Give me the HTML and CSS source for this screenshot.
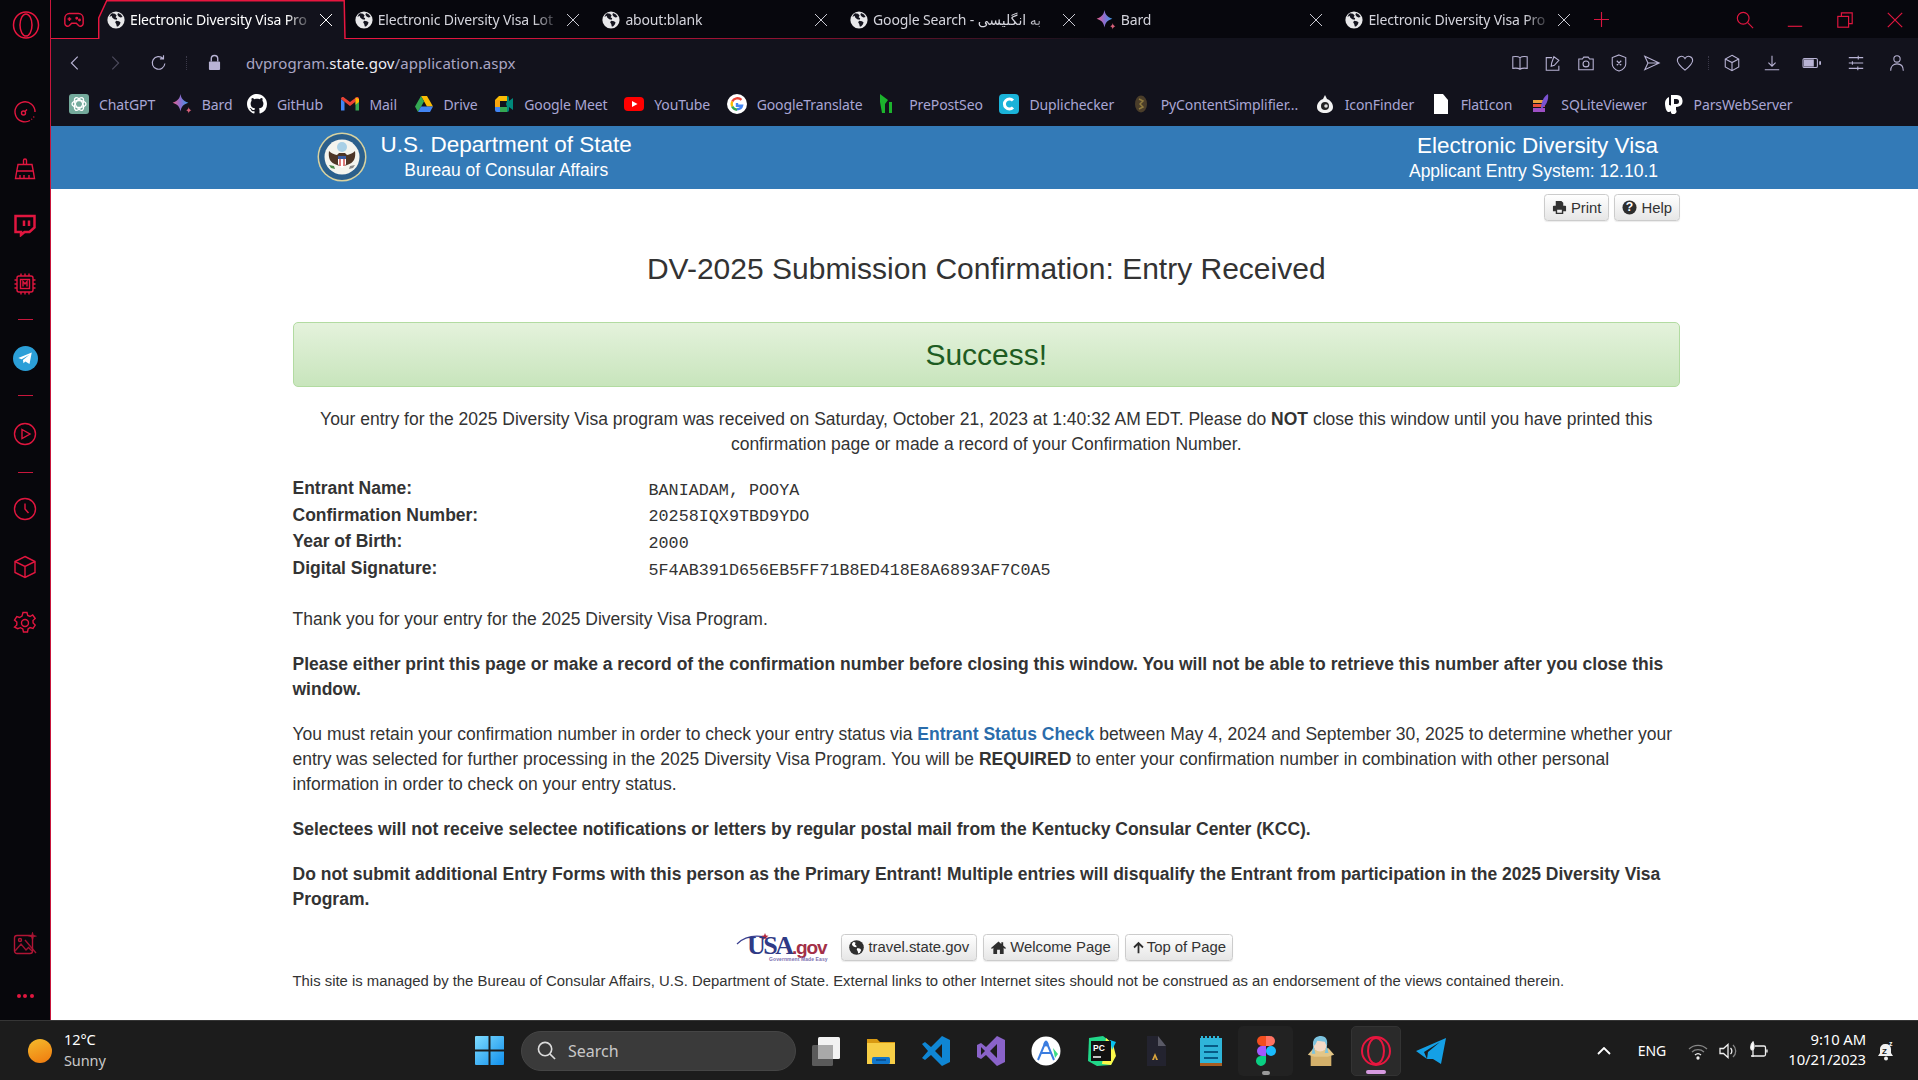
FILE: index.html
```html
<!DOCTYPE html>
<html lang="en">
<head>
<meta charset="utf-8">
<title>DV-2025 Submission Confirmation</title>
<link rel="stylesheet" href="styles.css">
</head>
<body>
<svg class="defs" width="0" height="0" aria-hidden="true">
  <symbol id="globe" viewBox="0 0 18 18">
    <circle cx="9" cy="9" r="8.6" fill="#e8e8ea"/>
    <path d="M5 2.2l3 .6 1.6 1.6-1 1.8 1.6 1-.6 1.6-2.4-.6-2-1.6-.6-1.8L2.4 6 3.6 3.4zM9 9.8l3 .4 1.6 1.2-.8 2.2-1.8 2-1.2-.2-.6-2.4-1-1.6zM11 2l3 1.4 1.6 2.6-2.2.6-1.8-1.2-1.2-1.6z" fill="#15151f"/>
  </symbol>
  <symbol id="x" viewBox="0 0 14 14"><path d="M1 1l12 12M13 1L1 13" fill="none" stroke="currentColor" stroke-width="1"/></symbol>
  <symbol id="bard" viewBox="1 1 21.500 23">
    <defs><linearGradient id="bg" x1="0" x2="1" y1="0" y2="0"><stop offset="0" stop-color="#e8608a"/><stop offset=".5" stop-color="#8a6fd0"/><stop offset="1" stop-color="#3b9be8"/></linearGradient></defs>
    <path d="M10 1c.8 5 3 8 9 10-6 2-8.200 5-9 10-.8-5-3-8-9-10 6-2 8.200-5 9-10z" fill="url(#bg)"/>
    <path d="M19.500 16c.3 2 1 3 3 3.800-2 .7-2.700 1.700-3 3.700-.3-2-1-3-3-3.700 2-.8 2.700-1.800 3-3.800z" fill="#d9607a"/>
  </symbol>
  <symbol id="glob-d" viewBox="0 0 16 16">
    <circle cx="8" cy="8" r="7.800" fill="#2e2e2e"/>
    <path d="M5 1.800l2 1.200-.6 2 1.800 1.400-.6 1.400-2.400-.6-2-1.800.2-2zM9 8.600l3 .6 1 1.400-1.400 3-1.800.8-.6-2.600-1-1.400z" fill="#fff"/>
  </symbol>
</svg>

<div class="app">
  <aside class="sidebar">
    <svg class="side-logo" viewBox="0 0 30 30"><ellipse cx="15" cy="15" rx="12.500" ry="13" fill="none" stroke="#e8163f" stroke-width="1.500"/><ellipse cx="15" cy="15" rx="6" ry="11" fill="none" stroke="#e8163f" stroke-width="1.500"/></svg>
    <svg class="side-ic s-speed" viewBox="0 0 24 24"><path d="M17 20.500A10 10 0 1 1 22 12" fill="none"/><path d="M21 16.500l-.5 1M19 19l-.6.600M14 9.500l-2 2" /><circle cx="10.500" cy="13" r="2"/></svg>
    <svg class="side-ic s-broom" viewBox="0 0 24 24"><path d="M10.500 7V3.500a1.500 1.500 0 0 1 3 0V7M5 7.500h14l1.500 8 1 6H2.500l1-6zM3.500 14h17M7 21v-3M11 21v-3M16 21v-3"/></svg>
    <svg class="side-ic s-twitch" viewBox="0 0 24 24"><path d="M2.500 3h19v11.500l-5 4.500h-5L8 22v-3H2.500zM11 7.500V13M16 7.500V13" stroke-width="2.500"/></svg>
    <svg class="side-ic s-chip" viewBox="0 0 24 24"><rect x="4" y="4" width="16" height="16" rx="2"/><rect x="7.500" y="7.500" width="9" height="9"/><path d="M8 1.500V4M12 1.500V4M16 1.500V4M8 20v2.500M12 20v2.500M16 20v2.500M1.500 8H4M1.500 12H4M1.500 16H4M20 8h2.500M20 12h2.500M20 16h2.500M10 14.500v-5l2 2.500 2-2.500v5"/></svg>
    <i class="side-sep s-sep1"></i>
    <div class="side-tg"><svg viewBox="0 0 24 24"><path d="M3 12L21 4.500 18 20l-5.500-3.500-2.500 2.500-.8-4.500L18 7.500 7.500 13.800z" fill="#fff"/></svg></div>
    <i class="side-sep s-sep2"></i>
    <svg class="side-ic s-play" viewBox="0 0 24 24"><circle cx="12" cy="12" r="10.500"/><path d="M9 7.500l8 4.500-8 4.500z"/></svg>
    <i class="side-sep s-sep3"></i>
    <svg class="side-ic s-clock" viewBox="0 0 24 24"><circle cx="12" cy="12" r="10.500"/><path d="M12 6.500V12l3.500 4"/></svg>
    <svg class="side-ic s-cube" viewBox="0 0 24 24"><path d="M12 1.500l10 5v11l-10 5-10-5v-11zM2 6.500l10 5 10-5M12 11.500v11"/></svg>
    <svg class="side-ic s-gear" viewBox="0 0 24 24"><circle cx="12" cy="12" r="3.500"/><path d="M10 1.500h4l.7 3 2.300 1 2.700-1.500 2.500 3.500-2.200 2 .1 2.500 2.100 2-2.200 3.500-2.900-1-2 1.400-.6 3.100h-4l-.7-3-2.300-1.300-2.800 1L1.500 16l2.300-2.100V11L1.500 9l2.300-3.500 2.800 1 2.400-1.400z"/></svg>
    <div class="side-bottom">
      <svg class="side-ic" viewBox="0 0 24 24"><rect x="1.500" y="3.500" width="18" height="18" rx="2.500"/><path d="M2 19l6-7 5 6 2.500-2.500L19 19M19.500 1.500l.6 2 2 .6-2 .6-.6 2-.6-2-2-.6 2-.6zM12 8l11 13" opacity=".9"/><circle cx="7" cy="8" r="1.500"/></svg>
      <div class="side-dots"><i></i><i></i><i></i></div>
    </div>
  </aside>

  <main class="window">
    <nav class="tabstrip">
      <svg class="gamepad" viewBox="0 0 24 24"><path d="M7 5h10a5 5 0 0 1 5 5v6a3 3 0 0 1-5 2l-2.500-2.500h-5L7 18a3 3 0 0 1-5-2v-6a5 5 0 0 1 5-5zM7 9v4M5 11h4"/><circle cx="15" cy="10" r=".8"/><circle cx="18" cy="12" r=".8"/></svg>
      <div class="tab tab-active">
        <svg class="tab-outline" viewBox="0 0 248 39"><path d="M.7 39V18L8.700 .8h237.500L247 39" fill="#12121c" stroke="#e8163f" stroke-width="1.500"/></svg>
        <svg class="fav"><use href="#globe"/></svg><span class="tab-title bright">Electronic Diversity Visa Pro</span><svg class="tab-x"><use href="#x"/></svg>
      </div>
      <div class="tab"><svg class="fav"><use href="#globe"/></svg><span class="tab-title">Electronic Diversity Visa Lot</span><svg class="tab-x"><use href="#x"/></svg></div>
      <div class="tab"><svg class="fav"><use href="#globe"/></svg><span class="tab-title">about:blank</span><svg class="tab-x"><use href="#x"/></svg></div>
      <div class="tab"><svg class="fav"><use href="#globe"/></svg><span class="tab-title">Google Search - به انگلیسی</span><svg class="tab-x"><use href="#x"/></svg></div>
      <div class="tab"><svg class="fav fav-big"><use href="#bard"/></svg><span class="tab-title">Bard</span><svg class="tab-x"><use href="#x"/></svg></div>
      <div class="tab"><svg class="fav"><use href="#globe"/></svg><span class="tab-title">Electronic Diversity Visa Pro</span><svg class="tab-x"><use href="#x"/></svg></div>
      <svg class="newtab" viewBox="0 0 16 16"><path d="M8 0v16M0 8h16"/></svg>
      <div class="winctl">
        <svg viewBox="0 0 20 20"><circle cx="8" cy="8" r="6.500"/><path d="M13 13l6 6"/></svg>
        <svg viewBox="0 0 20 20"><path d="M2 17h16"/></svg>
        <svg viewBox="0 0 20 20"><rect x="2" y="6" width="12" height="12"/><path d="M6 6V2h12v12h-4"/></svg>
        <svg viewBox="0 0 20 20"><path d="M2 2l16 16M18 2L2 18"/></svg>
      </div>
    </nav>

    <div class="toolbar">
      <svg class="tb-ic" viewBox="0 0 20 20"><path d="M13 3l-7 7 7 7"/></svg>
      <svg class="tb-ic tb-fwd" viewBox="0 0 20 20"><path d="M7 3l7 7-7 7"/></svg>
      <svg class="tb-ic tb-reload" viewBox="0 0 20 20"><path d="M16.500 10.500a7 7 0 1 1-2-5.500M15 1.500V5.500h-4"/></svg>
      <i class="tb-sep"></i>
      <svg class="lock" viewBox="0 0 14 18"><path d="M3.500 8V5a3.500 3.500 0 0 1 7 0v3" fill="none" stroke="#b8b3d4" stroke-width="1.500"/><rect x="1" y="8" width="12" height="9" rx="1" fill="#b8b3d4"/></svg>
      <div class="url">dvprogram.<b>state.gov</b>/application.aspx</div>
      <div class="tb-right">
        <svg viewBox="0 0 20 20"><path d="M10 4C8 2.500 5 2.500 2 3v13c3-.5 6-.5 8 1 2-1.500 5-1.500 8-1V3c-3-.5-6-.5-8 1zM10 4v13"/></svg>
        <svg viewBox="0 0 20 20"><path d="M9 4H2.500v14h14v-5M11 3l5.500 4-5 5.500-3.500 1 .5-3.500zM2.500 18h14"/></svg>
        <svg viewBox="0 0 20 20"><path d="M2 5.500h4l1.500-2h5l1.500 2h4v12H2z"/><circle cx="10" cy="11" r="3.300"/></svg>
        <svg viewBox="0 0 20 20"><path d="M10 1l7.500 3v7c0 4-3.500 6.500-7.500 8-4-1.500-7.500-4-7.500-8V4zM7.500 7.500l5 5M12.500 7.500l-5 5"/></svg>
        <svg viewBox="0 0 20 20"><path d="M2 2.500l16 7.500-16 7.500 3.500-7.500zM5.500 10H18"/></svg>
        <svg viewBox="0 0 20 20"><path d="M10 18C5 14 1.500 11 1.500 7a4.500 4.500 0 0 1 8.500-2 4.500 4.500 0 0 1 8.500 2c0 4-3.500 7-8.500 11z"/></svg>
        <i class="tb-sep"></i>
        <svg viewBox="0 0 20 20"><path d="M10 1.500l7.500 4v9l-7.500 4-7.500-4v-9zM2.500 5.500l7.500 4 7.500-4M10 9.500v9"/></svg>
        <svg class="tr-dl" viewBox="0 0 20 20"><path d="M10 2v11M6 9.500l4 4 4-4M2 17.500h16"/></svg>
        <svg class="tr-bat" viewBox="0 0 22 20"><rect x="1" y="5" width="16" height="10" rx="1.500"/><rect x="2" y="6" width="11" height="8" fill="#b8b3d4" stroke="none"/><path d="M20 8v4" stroke-width="2"/></svg>
        <svg class="tr-set" viewBox="0 0 20 20"><path d="M2 4h16M2 10h16M2 16h16M12.500 2v4M6 8v4M12 14v4"/></svg>
        <svg class="tr-usr" viewBox="0 0 20 20"><circle cx="10" cy="5.500" r="3.500"/><path d="M3 18.500c0-5 3-7.500 7-7.500s7 2.500 7 7.500"/></svg>
      </div>
    </div>

    <div class="bookmarks">
      <a><svg viewBox="0 0 20 20"><rect width="20" height="20" rx="3" fill="#74aa9c"/><g fill="none" stroke="#fff" stroke-width="1.300"><ellipse cx="10" cy="10" rx="7" ry="3.500"/><ellipse cx="10" cy="10" rx="7" ry="3.500" transform="rotate(60 10 10)"/><ellipse cx="10" cy="10" rx="7" ry="3.500" transform="rotate(120 10 10)"/></g></svg>ChatGPT</a>
      <a><svg><use href="#bard"/></svg>Bard</a>
      <a class="bm-gh"><svg viewBox="0 0 16 16"><path fill="#fff" d="M8 0C3.580 0 0 3.580 0 8c0 3.540 2.290 6.530 5.470 7.590.4.070.55-.17.55-.38 0-.19-.01-.82-.01-1.490-2.010.37-2.530-.49-2.690-.94-.09-.23-.48-.94-.82-1.130-.28-.15-.68-.52-.01-.53.63-.01 1.080.58 1.230.82.72 1.210 1.870.87 2.330.66.07-.52.28-.87.51-1.070-1.780-.2-3.640-.89-3.640-3.950 0-.87.31-1.590.82-2.150-.08-.2-.36-1.020.08-2.120 0 0 .67-.21 2.200.82.64-.18 1.320-.27 2-.27.68 0 1.360.09 2 .27 1.530-1.040 2.200-.82 2.200-.82.44 1.100.16 1.920.08 2.120.51.56.82 1.270.82 2.150 0 3.070-1.870 3.750-3.650 3.950.29.25.54.73.54 1.480 0 1.070-.01 1.930-.01 2.200 0 .21.15.46.55.38A8.013 8.013 0 0016 8c0-4.420-3.580-8-8-8z"/></svg>GitHub</a>
      <a><svg viewBox="0 0 20 20"><path d="M1 5v11.500h3.500V8z" fill="#4285f4"/><path d="M19 5v11.500h-3.500V8z" fill="#34a853"/><path d="M1 5c0-2 2-2.500 3-1.500l6 4.500 6-4.500c1-1 3-.5 3 1.500l-9 7z" fill="#ea4335"/><path d="M15.500 3.500L19 5v3l-3.500 2.700z" fill="#fbbc04"/></svg>Mail</a>
      <a><svg viewBox="0 0 20 20"><path d="M7 2h6l6 10.500h-6z" fill="#fbbc04"/><path d="M7 2l-6 10.500L4 18l6-10.500z" fill="#34a853"/><path d="M7 12.500h12L16 18H4z" fill="#4285f4"/></svg>Drive</a>
      <a><svg viewBox="0 0 20 20"><path d="M5 2h8v5H6v6H1V6z" fill="#fbbc04"/><path d="M1 13h5v5H3a2 2 0 0 1-2-2z" fill="#4285f4"/><path d="M6 13h7v5H6z" fill="#34a853"/><path d="M13 2a2 2 0 0 1 2 2v3l4-3v12l-4-3v3a2 2 0 0 1-2 2v-5l-1-3 1-3z" fill="#00897b"/><path d="M1 6h5v7H1z" fill="#ea4335" opacity=".2"/></svg>Google Meet</a>
      <a><svg viewBox="0 0 20 20"><rect y="3" width="20" height="14" rx="4" fill="#f00"/><path d="M8 7l5.500 3L8 13z" fill="#fff"/></svg>YouTube</a>
      <a><svg viewBox="0 0 20 20"><circle cx="10" cy="10" r="10" fill="#fff"/><path d="M10 9v2.800h5c-.5 2-2.200 3.400-5 3.400" fill="none" stroke="#4285f4" stroke-width="2.400"/><path d="M14.500 5.800A6 6 0 0 0 5.200 7.500" fill="none" stroke="#ea4335" stroke-width="2.400"/><path d="M5.200 7.500a6 6 0 0 0 0 5" fill="none" stroke="#fbbc04" stroke-width="2.400"/><path d="M5.200 12.500A6 6 0 0 0 10 15.800" fill="none" stroke="#34a853" stroke-width="2.400"/></svg>GoogleTranslate</a>
      <a><svg viewBox="0 0 20 20"><path d="M1 0l8 6-3 4v9H3L1 8zM10 8v11h3V8z" fill="#1cb32d"/></svg>PrePostSeo</a>
      <a><svg viewBox="0 0 20 20"><rect width="20" height="20" rx="4" fill="#1ab3d9"/><path d="M14 6.500a5 5 0 1 0 0 7" fill="none" stroke="#fff" stroke-width="3"/></svg>Duplichecker</a>
      <a><svg viewBox="0 0 20 20"><ellipse cx="10" cy="10" rx="6" ry="8.500" fill="#4a3d2a"/><path d="M8 5l4 2-3 3 3 3-4 2" fill="none" stroke="#8f7a3e" stroke-width="1.500"/></svg>PyContentSimplifier...</a>
      <a><svg viewBox="0 0 20 20"><path d="M10 1l2 4c3 1 6 4 6 8 0 4-4 6-8 6s-8-2-8-6c0-4 3-7 6-8z" fill="#f2f2f2"/><circle cx="10" cy="12" r="4" fill="#222"/><circle cx="11" cy="12" r="1.800" fill="#ddd"/></svg>IconFinder</a>
      <a><svg viewBox="0 0 20 20"><path d="M3 0h9l5 6v14H3z" fill="#fff"/></svg>FlatIcon</a>
      <a class="bm-sql"><svg viewBox="0 0 20 20"><path d="M2 6h12v3H2z" fill="#e9a23b"/><path d="M2 10h12v3H2z" fill="#e8503a"/><path d="M2 14h12v4H2z" fill="#9d4fc4"/><path d="M17 0c1 6-2 12-7 15 0-6 2-12 7-15z" fill="#7a52d0"/></svg>SQLiteViewer</a>
      <a><svg viewBox="0 0 20 20"><path d="M7 1h6a6 6 0 0 1 1 11.800l-2 .2v2.800a2.500 2.500 0 0 1-5 3zM1 9a7 7 0 0 1 4-6v8a3 3 0 0 1-1 7c-2-1-3-5-3-9z" fill="#fff"/><path d="M10 5h2.500a2.500 2.500 0 0 1 0 5H10z" fill="#12121c"/></svg>ParsWebServer</a>
    </div>

    <div class="page">
      <header class="site-head">
        <div class="head-inner">
          <svg class="seal" viewBox="0 0 50 50">
            <circle cx="25" cy="25" r="24.500" fill="#d8d2a0"/><circle cx="25" cy="25" r="23" fill="#2b5f8c"/><circle cx="25" cy="25" r="17.500" fill="#f4f4ee"/>
            <circle cx="25" cy="15" r="5" fill="#a9d0e6"/>
            <path d="M12 19c3 3 5 3 8 4l2-2h6l2 2c3-1 5-1 8-4 1 7-1 12-8 14l-5 2-5-2c-7-2-9-7-8-14z" fill="#4d3526"/>
            <path d="M21 24h8v8c-1 3-3 3.500-4 4-1-.5-3-1-4-4z" fill="#fff"/><path d="M21 24h8v3h-8z" fill="#3a5aa0"/><path d="M23 27v7M27 27v7" stroke="#c33" stroke-width="1.300"/>
            <path d="M12 33l5 1 1 3-4-1z" fill="#4a8a4a"/><path d="M38 33l-5 1-1 3 4-1z" fill="#8a8a8a"/>
          </svg>
          <div class="head-title">
            <div class="ht-main">U.S. Department of State</div>
            <div class="ht-sub">Bureau of Consular Affairs</div>
          </div>
          <div class="head-right">
            <div class="hr-main">Electronic Diversity Visa</div>
            <div class="hr-sub">Applicant Entry System: 12.10.1</div>
          </div>
        </div>
      </header>

      <div class="container">
        <div class="top-btns">
          <a class="btn"><svg viewBox="0 0 16 16"><path d="M4 1h6l2 2v3H4zM1 7a1 1 0 0 1 1-1h12a1 1 0 0 1 1 1v5h-3v3H4v-3H1zM5.500 10.500v3h5v-3z" fill="#333" fill-rule="evenodd"/></svg>Print</a>
          <a class="btn"><svg viewBox="0 0 16 16"><circle cx="8" cy="8" r="7.500" fill="#2e2e2e"/><text x="8" y="12" text-anchor="middle" class="q">?</text></svg>Help</a>
        </div>

        <h1 class="title">DV-2025 Submission Confirmation: Entry Received</h1>

        <div class="alert">Success!</div>

        <p class="center">Your entry for the 2025 Diversity Visa program was received on Saturday, October 21, 2023 at 1:40:32 AM EDT. Please do <b>NOT</b> close this window until you have printed this confirmation page or made a record of your Confirmation Number.</p>

        <dl class="facts">
          <dt>Entrant Name:</dt><dd>BANIADAM, POOYA</dd>
          <dt>Confirmation Number:</dt><dd>20258IQX9TBD9YDO</dd>
          <dt>Year of Birth:</dt><dd>2000</dd>
          <dt>Digital Signature:</dt><dd>5F4AB391D656EB5FF71B8ED418E8A6893AF7C0A5</dd>
        </dl>

        <p>Thank you for your entry for the 2025 Diversity Visa Program.</p>
        <p><b>Please either print this page or make a record of the confirmation number before closing this window. You will not be able to retrieve this number after you close this window.</b></p>
        <p>You must retain your confirmation number in order to check your entry status via <a class="link">Entrant Status Check</a> between May 4, 2024 and September 30, 2025 to determine whether your entry was selected for further processing in the 2025 Diversity Visa Program. You will be <b>REQUIRED</b> to enter your confirmation number in combination with other personal information in order to check on your entry status.</p>
        <p><b>Selectees will not receive selectee notifications or letters by regular postal mail from the Kentucky Consular Center (KCC).</b></p>
        <p><b>Do not submit additional Entry Forms with this person as the Primary Entrant! Multiple entries will disqualify the Entrant from participation in the 2025 Diversity Visa Program.</b></p>

        <div class="foot-btns">
          <svg class="usagov" viewBox="0 -6 100 38">
            <path d="M1 11C8 4 18 2 29 4" fill="none" stroke="#3a3f8f" stroke-width="1.200"/>
            <path d="M29 0l1 2.500 2.500.3-2 1.500.6 2.500-2.100-1.400-2.100 1.400.6-2.500-2-1.500 2.500-.3z" fill="#b5263c"/>
            <text x="11" y="21" class="ug-a">USA</text><text x="56" y="21" class="ug-b">.gov</text>
            <text x="33" y="28" class="ug-c">Government Made Easy</text>
          </svg>
          <a class="btn"><svg><use href="#glob-d"/></svg>travel.state.gov</a>
          <a class="btn"><svg viewBox="0 0 16 16"><path d="M8 1.500L0 8.500l1 1 1.500-1.300V15h4v-4.500h3V15h4V8.200L15 9.500l1-1-3-2.600V2.500h-2v1.700z" fill="#2e2e2e"/></svg>Welcome Page</a>
          <a class="btn btn-up"><svg viewBox="0 0 16 16"><path d="M8 15V2.500M2.500 8L8 2.500 13.500 8" fill="none" stroke="#2e2e2e" stroke-width="2.200"/></svg>Top of Page</a>
        </div>
        <p class="fine">This site is managed by the Bureau of Consular Affairs, U.S. Department of State. External links to other Internet sites should not be construed as an endorsement of the views contained therein.</p>
      </div>
    </div>
  </main>
</div>

<footer class="taskbar">
  <div class="weather">
    <i class="sun"></i>
    <div class="w-text"><div class="w-temp">12°C</div><div class="w-desc">Sunny</div></div>
  </div>
  <svg class="start" viewBox="0 0 29 29">
    <defs><linearGradient id="wg" x1="0" y1="0" x2="1" y2="1"><stop offset="0" stop-color="#7fdcff"/><stop offset="1" stop-color="#0f8fec"/></linearGradient></defs>
    <path d="M1 0h12.500v13.500H0V1a1 1 0 0 1 1-1zM15.500 0H28a1 1 0 0 1 1 1v12.500H15.500zM0 15.500h13.500V29H1a1 1 0 0 1-1-1zM15.500 15.500H29V28a1 1 0 0 1-1 1H15.500z" fill="url(#wg)"/>
  </svg>
  <div class="searchbox">
    <svg viewBox="0 0 20 20"><circle cx="8.500" cy="8.500" r="7"/><path d="M13.500 13.500L19 19"/></svg>
    <span>Search</span>
  </div>
  <div class="apps">
    <div class="app-slot"><svg viewBox="0 0 30 30"><rect x="1" y="9" width="21" height="21" rx="1.500" fill="#5a5a5a"/><rect x="7" y="1" width="22" height="22" rx="1.500" fill="#f2f2f2"/><rect x="7" y="9" width="15" height="14" fill="#a9a9a9"/></svg></div>
    <div class="app-slot"><svg viewBox="0 0 30 30"><path d="M1 3h10l3 3h15v3H1z" fill="#d99a12"/><rect x="1" y="7" width="28" height="21" fill="#f7ce46"/><rect x="6" y="21" width="18" height="7" rx="1.500" fill="#1177cc"/><path d="M10 24h10" stroke="#0a4a88" stroke-width="1.500"/></svg></div>
    <div class="app-slot"><svg viewBox="0 0 30 30"><path d="M21 0l8 4v22l-8 4-11-11-6 5-3-2 6-7-6-7 3-2 6 5zM21 8l-7 7 7 7z" fill="#0f86d4"/></svg></div>
    <div class="app-slot"><svg viewBox="0 0 30 30"><path d="M21 0l8 4v22l-8 4-11-11-5 4-4-2V9l4-2 5 4zM21 8l-7 7 7 7zM5 11v8l4-4z" fill="#8a63c9"/></svg></div>
    <div class="app-slot"><svg viewBox="0 0 30 30"><circle cx="15" cy="15" r="14.500" fill="#fff"/><path d="M15 5l-8 19M15 5l8 19M9.500 17h11" fill="none" stroke="#3b7de0" stroke-width="2"/><circle cx="15" cy="8" r="2.500" fill="#3b7de0"/><path d="M22 12l5 6-3 4z" fill="#3ddc84"/></svg></div>
    <div class="app-slot"><svg viewBox="0 0 30 30"><path d="M3 2l14-2 8 6 4 14-4 9-14 1-9-5z" fill="#21d789"/><path d="M20 2l7 6 3 12-5 9-9-1z" fill="#fcf84a"/><path d="M24 4l6 2-4 8z" fill="#07c3f2"/><rect x="5" y="5" width="20" height="20" fill="#111"/><text x="7" y="15" class="pc">PC</text><path d="M7 21h8" stroke="#fff" stroke-width="1.500"/></svg></div>
    <div class="app-slot"><svg viewBox="0 0 24 30"><path d="M3 0h11l8 10v20H3z" fill="#23232f"/><path d="M14 0l8 10h-8z" fill="#5a5a66"/><path d="M11 17l3 7h-2l-1-3-1 3H8z" fill="#d9a43c"/></svg></div>
    <div class="app-slot"><svg viewBox="0 0 26 30"><rect x="2" y="2" width="22" height="27" fill="#2fb5d9"/><path d="M2 27h22v3H2z" fill="#a85c20"/><path d="M6 10h14M6 16h14M6 22h14" stroke="#075b85" stroke-width="2"/><path d="M4 0v3M8 0v3M12 0v3M16 0v3M20 0v3" stroke="#2fb5d9" stroke-width="2"/></svg></div>
    <div class="app-slot tile-soft"><svg viewBox="0 0 20 30"><path d="M10 0H6a5 5 0 0 0 0 10h4z" fill="#f24e1e"/><path d="M10 0h4a5 5 0 0 1 0 10h-4z" fill="#ff7262"/><path d="M10 10H6a5 5 0 0 0 0 10h4z" fill="#a259ff"/><circle cx="15" cy="15" r="5" fill="#1abcfe"/><path d="M6 20h4v5a5 5 0 1 1-4-5z" fill="#0acf83"/></svg><i class="run run-grey"></i></div>
    <div class="app-slot"><svg viewBox="0 0 28 32"><rect x="3" y="18" width="22" height="14" fill="#d4b06a"/><path d="M0 20l6-7h16l6 7-7 2H7z" fill="#e3c687"/><circle cx="13" cy="9" r="7.500" fill="#f4d9c6"/><path d="M6 11C4 2 10 0 14 0c5 0 8 4 6 11l-2-5-8-1-2 4z" fill="#7cc3df"/><path d="M6 10l-2 9h4zM20 10l2 8h-4z" fill="#7cc3df"/></svg></div>
    <div class="app-slot tile-on"><svg viewBox="0 0 30 30"><ellipse cx="15" cy="15" rx="14" ry="14" fill="none" stroke="#e8163f" stroke-width="2"/><ellipse cx="15" cy="15" rx="8" ry="13" fill="none" stroke="#e8163f" stroke-width="2"/></svg><i class="run run-pink"></i></div>
    <div class="app-slot"><svg viewBox="0 0 30 30"><path d="M0 15L30 2l-5 26-8-5-6 0zM11 23l1-7 12-10-16 10z" fill="#14a0e6"/></svg></div>
  </div>
  <div class="tray">
    <svg class="t-caret" viewBox="0 0 14 8"><path d="M1 7l6-6 6 6"/></svg>
    <span class="t-lang">ENG</span>
    <svg class="t-ic" viewBox="0 0 20 20"><path d="M1 8a13 13 0 0 1 18 0M4 11a9 9 0 0 1 12 0" opacity=".5"/><path d="M7 14a4.500 4.500 0 0 1 6 0"/><circle cx="10" cy="17" r="1" fill="#fff"/></svg>
    <svg class="t-ic" viewBox="0 0 20 20"><path d="M2 7.500h3.500L10 3.500v13l-4.500-4H2zM12.500 7a4 4 0 0 1 0 6"/><path d="M15 4a8 8 0 0 1 0 12" opacity=".5"/></svg>
    <svg class="t-ic" viewBox="0 0 20 20"><path d="M7 5h9a1.500 1.500 0 0 1 1.500 1.500v7A1.500 1.500 0 0 1 16 15H3M19 8.500v3"/><path d="M5 1c1 3 2 5 0 8-3 0-3-5 0-8zM5 9v7" fill="#fff"/></svg>
    <div class="clock"><div>9:10 AM</div><div>10/21/2023</div></div>
    <svg class="t-bell" viewBox="0 0 18 20"><path d="M9 3a5 5 0 0 1 5 5v4l2 3H1l2-3V8a5 5 0 0 1 5-5z" fill="#f2f2f2"/><circle cx="9" cy="17.500" r="2" fill="#f2f2f2"/><text x="5" y="12.500" class="zz">Z</text><text x="12" y="5" class="zzw">z</text></svg>
  </div>
</footer>
</body>
</html>
```

FILE: styles.css
```css
* { box-sizing: border-box; }
html, body { margin: 0; padding: 0; }
body {
  width: 1918px;
  height: 1080px;
  overflow: hidden;
  display: flex;
  flex-direction: column;
  background: #08080e;
  font-family: "Liberation Sans", Arial, sans-serif;
}
.defs { position: absolute; }
svg { display: block; flex: none; }
.app { display: flex; height: 1020px; }

/* sidebar */
.sidebar {
  width: 51px;
  flex: none;
  display: flex;
  flex-direction: column;
  align-items: center;
  padding-top: 10px;
  background: #07070c;
  border-right: 1px solid #c8163c;
}
.side-logo { width: 30px; height: 30px; margin-left: 1px; }
.side-ic {
  width: 24px;
  height: 24px;
  fill: none;
  stroke: #e0163f;
  stroke-width: 1.4;
}
.s-speed { margin-top: 60px; }
.s-broom { margin-top: 33px; }
.s-twitch { margin-top: 31.5px; }
.s-chip { margin-top: 35px; }
.s-sep1 { margin-top: 23.5px; }
.side-tg { margin-top: 25.5px; }
.s-sep2 { margin-top: 24.5px; }
.s-play { margin-top: 25.5px; }
.s-sep3 { margin-top: 26.5px; }
.s-clock { margin-top: 24px; }
.s-cube { margin-top: 34px; }
.s-gear { margin-top: 32px; }
.side-sep { display: block; width: 15px; height: 1px; background: #c8163c; flex: none; }
.side-tg {
  width: 25px; height: 25px; border-radius: 50%; background: #2b9fd8; flex: none;
  display: flex; align-items: center; justify-content: center;
}
.side-tg svg { width: 18px; height: 18px; }
.side-bottom {
  margin-top: auto;
  display: flex; flex-direction: column; align-items: center; gap: 38px;
  padding-bottom: 22px;
}
.side-bottom .side-ic { stroke: #b01535; }
.side-dots { display: flex; gap: 2.5px; }
.side-dots i { width: 4px; height: 4px; border-radius: 50%; background: #e0163f; }

/* window */
.window { flex: 1; min-width: 0; display: flex; flex-direction: column; }
.tabstrip {
  position: relative;
  height: 39px;
  flex: none;
  display: flex;
  align-items: center;
  background: #07070d;
  padding-left: 12px;
}
.tabstrip::after {
  content: "";
  position: absolute;
  left: 0; right: 0; bottom: 0;
  height: 1px;
  background: linear-gradient(90deg, #e8163f 0, #e8163f 20%, #8a1230 40%, #12121c 56%);
}
.gamepad { width: 22px; height: 22px; fill: none; stroke: #e0163f; stroke-width: 1.6; margin-right: 13px; }
.tab {
  position: relative;
  width: 247.7px;
  height: 39px;
  flex: none;
  display: flex;
  align-items: center;
  gap: 5px;
  padding: 0 13px 0 9px;
  z-index: 1;
}
.tab-outline { position: absolute; left: 0; top: 0; width: 248px; height: 39px; }
.fav { position: relative; width: 18px; height: 18px; }
.fav-big { width: 20px; height: 20px; margin-left: -2px; }
.tab-title {
  position: relative;
  flex: 1;
  min-width: 0;
  white-space: nowrap;
  overflow: hidden;
  font: 14px "Noto Sans", "DejaVu Sans", sans-serif;
  letter-spacing: -0.15px;
  color: #d4d4dc;
  -webkit-mask-image: linear-gradient(90deg, #000 85%, transparent 100%);
  mask-image: linear-gradient(90deg, #000 85%, transparent 100%);
}
.tab-title.bright { color: #fff; }
.tab-x { position: relative; width: 14px; height: 14px; color: #c9c9d2; }
.tab-active .tab-x { color: #fff; }
.newtab { width: 15px; height: 15px; fill: none; stroke: #d8163f; stroke-width: 1.2; margin-left: 10px; }
.winctl { margin-left: auto; display: flex; align-items: center; gap: 32px; padding-right: 14px; }
.winctl svg { width: 18px; height: 18px; fill: none; stroke: #e0163f; stroke-width: 1.3; }

.toolbar {
  height: 47px;
  flex: none;
  display: flex;
  align-items: center;
  background: #12121c;
  padding-left: 15px;
}
.tb-ic { width: 18px; height: 18px; fill: none; stroke: #b8b3d4; stroke-width: 1.3; margin-right: 22px; }
.tb-fwd { stroke: #4c4a5c; margin-right: 25.5px; }
.tb-reload { margin-right: 18.5px; }
.tb-sep { display: block; width: 1px; height: 14px; border-left: 1px dotted #3a3848; flex: none; }
.lock { width: 13px; height: 17px; margin-left: 21px; }
.url {
  margin-left: 25px;
  font: 15px "Noto Sans", sans-serif;
  letter-spacing: 0.07px;
  color: #aaa6c4;
}
.url b { font-weight: 400; color: #eeeef4; }
.tb-right {
  margin-left: auto;
  display: flex;
  align-items: center;
  gap: 15px;
  padding-right: 11px;
}
.tb-right svg { width: 18px; height: 18px; fill: none; stroke: #b8b3d4; stroke-width: 1.2; }
.tb-right .tb-sep { margin: 0 -1px; }
.tb-right .tr-dl { width: 20px; margin-left: 6px; }
.tb-right .tr-bat { width: 20px; margin-left: 5px; }
.tb-right .tr-set { margin-left: 10px; }
.tb-right .tr-usr { width: 20px; margin-left: 7px; }

.bookmarks {
  height: 40px;
  flex: none;
  display: flex;
  align-items: center;
  gap: 16.6px;
  background: #12121c;
  padding: 0 0 4px 18px;
  font: 14px "Noto Sans", sans-serif;
  letter-spacing: -0.1px;
  color: #a9a6d4;
  white-space: nowrap;
}
.bookmarks a { display: flex; align-items: center; gap: 10px; }
.bookmarks svg { width: 20px; height: 20px; }
.bookmarks .bm-gh { margin-left: -2px; }
.bookmarks .bm-sql { margin-left: 2.5px; }

/* page */
.page { flex: 1; background: #fff; color: #333; font-size: 17.5px; line-height: 25px; }
.site-head { height: 63px; background: #337ab7; color: #fff; }
.head-inner {
  width: 1387.5px;
  height: 63px;
  margin-left: 241.5px;
  display: flex;
  align-items: center;
  padding: 0 22px 0 24px;
}
.seal { width: 50px; height: 50px; margin-top: -2px; }
.head-title { margin-left: 14px; text-align: center; }
.ht-main { font-size: 22.5px; line-height: 28px; margin-top: -3px; }
.ht-sub { font-size: 17.5px; line-height: 22px; margin-top: 0; }
.head-right { margin-left: auto; text-align: right; }
.hr-main { font-size: 22.5px; line-height: 28px; margin-top: -1px; }
.hr-sub { font-size: 17.5px; line-height: 22px; margin-top: 0; }

.container { width: 1387.5px; margin-left: 241.5px; }
.top-btns { display: flex; justify-content: flex-end; gap: 5px; padding-top: 5px; }
.btn {
  display: flex;
  align-items: center;
  gap: 4px;
  height: 27px;
  padding: 0 7px;
  font-size: 14.875px;
  line-height: 20px;
  color: #333;
  background: linear-gradient(#fff, #e6e6e6);
  border: 1px solid #ccc;
  border-radius: 3.5px;
  box-shadow: 0 1px 1px rgba(0,0,0,.08);
  white-space: nowrap;
}
.btn svg { width: 15px; height: 15px; }
.btn-up { gap: 2px; padding: 0 6px; }
.btn-up svg { width: 13px; }
.q { font: bold 13px "Liberation Sans", sans-serif; fill: #fff; }
.title {
  margin: 28.5px 0 0;
  height: 38px;
  font-size: 30px;
  line-height: 38px;
  font-weight: 400;
  text-align: center;
  color: #333;
}
.alert {
  margin-top: 34.5px;
  height: 65px;
  display: flex;
  align-items: center;
  justify-content: center;
  font-size: 30px;
  color: #1e5c22;
  background: linear-gradient(#e4f2dc, #c8e5bc);
  border: 1px solid #b2dba1;
  border-radius: 5px;
}
p { margin: 0 0 20px; }
.center { text-align: center; margin: 19.5px 0 0; }
.facts {
  margin: 20.5px 0 24px;
  display: grid;
  grid-template-columns: 356px 1fr;
  grid-auto-rows: 26.6px;
  align-items: center;
}
.facts dt { font-weight: 700; line-height: 25px; margin-top: -3px; }
.facts dd {
  margin: 0;
  font: 16.76px/25px "Liberation Mono", monospace;
}
.link { font-weight: 700; color: #2a6cab; }
.foot-btns {
  display: flex;
  justify-content: center;
  align-items: center;
  gap: 6px;
  height: 30px;
  margin-top: 1px;
  padding-right: 3px;
}
.usagov { width: 100px; height: 38px; margin-top: -2px; margin-right: -1px; }
.ug-a { font: 700 26px "Liberation Serif", serif; fill: #2f3a85; letter-spacing: -2.500px; }
.ug-b { font: 700 19px "Liberation Sans", sans-serif; fill: #a33048; letter-spacing: -1.200px; }
.ug-c { font: 700 5px "Liberation Sans", sans-serif; fill: #7a6fb0; letter-spacing: .1px; }
.fine { margin: 9px 0 0; font-size: 14.875px; line-height: 20px; }

/* taskbar */
.taskbar {
  height: 60px;
  flex: none;
  display: flex;
  align-items: center;
  background: #1c1c1c;
  border-top: 1px solid #353535;
  color: #fff;
  font-family: "Noto Sans", sans-serif;
}
.weather { width: 475px; flex: none; display: flex; align-items: center; gap: 12px; padding-left: 28px; }
.sun { display: block; width: 24px; height: 24px; border-radius: 50%; background: linear-gradient(160deg, #f4bb2c, #f0790e); }
.w-text { font-size: 14.5px; line-height: 21px; letter-spacing: -.1px; padding-bottom: 2px; }
.w-desc { color: #c9c9c9; }
.start { width: 29px; height: 29px; }
.searchbox {
  width: 275px;
  height: 40px;
  margin-left: 17px;
  display: flex;
  align-items: center;
  gap: 12px;
  padding-left: 15px;
  background: #3a3a3a;
  border: 1px solid #454545;
  border-radius: 20px;
  font-size: 16px;
  color: #c8c8c8;
}
.searchbox svg { width: 19px; height: 19px; fill: none; stroke: #dcdcdc; stroke-width: 1.7; }
.apps { display: flex; margin-left: 2px; }
.app-slot {
  position: relative;
  width: 55px;
  height: 50px;
  display: flex;
  align-items: center;
  justify-content: center;
  border-radius: 5px;
}
.app-slot svg { width: 30px; height: 30px; }
.tile-soft { background: #222; }
.tile-on { width: 50px; margin: 0 2.5px; background: #2a2a2a; border: 1px solid #333; }
.run { position: absolute; bottom: 1px; left: 50%; transform: translateX(-50%); height: 4px; border-radius: 2px; }
.run-grey { width: 8px; background: #9a9a9a; }
.run-pink { width: 20px; background: #d69ae0; }
.tray { margin-left: auto; display: flex; align-items: center; padding-right: 23px; }
.t-caret { width: 14px; height: 8px; fill: none; stroke: #fff; stroke-width: 1.8; }
.t-lang { margin-left: 27px; margin-right: 22px; font-size: 14px; }
.t-ic { width: 20px; height: 20px; fill: none; stroke: #f0f0f0; stroke-width: 1.3; margin-right: 10px; }
.clock { margin-left: 10px; font-size: 14.8px; line-height: 20.5px; text-align: right; letter-spacing: -.1px; padding-bottom: 3px; }
.t-bell { width: 18px; height: 20px; margin-left: 11px; }
.zz { font: 700 8px "Liberation Sans", sans-serif; fill: #1c1c1c; }
.zzw { font: 700 7px "Liberation Sans", sans-serif; fill: #f2f2f2; }
.pc { font: 700 8.500px "Liberation Sans", sans-serif; fill: #fff; }
```
